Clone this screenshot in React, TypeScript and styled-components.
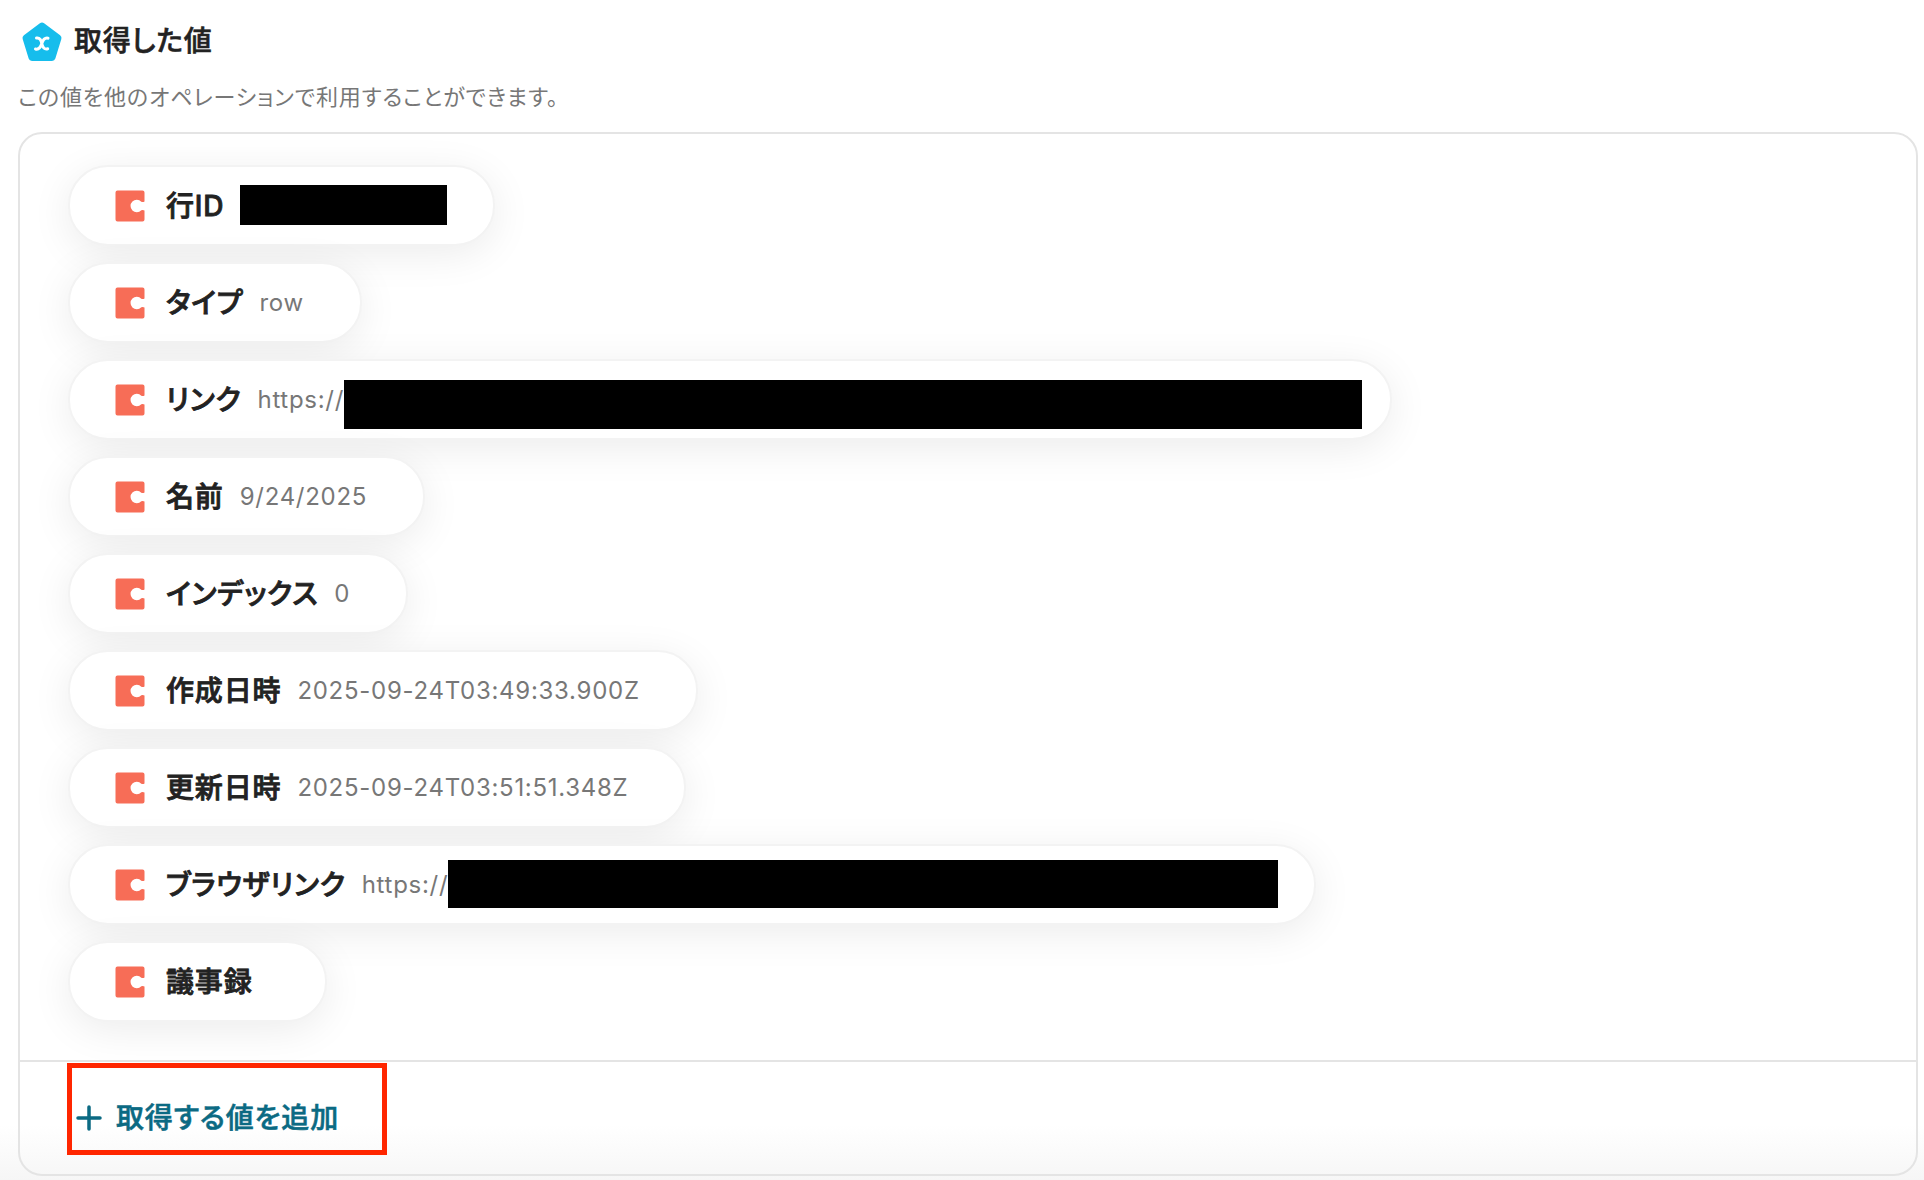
import React from "react";
import styled, { createGlobalStyle } from "styled-components";

const GlobalStyle = createGlobalStyle`
  * { box-sizing: border-box; }
  body {
    margin: 0;
    background: #fff;
    color: #222;
    font-family: Inter, "Noto Sans CJK JP", sans-serif;
    font-feature-settings: "palt", "kern";
    font-kerning: normal;
  }
`;

const Page = styled.main`
  min-height: 100vh;
  padding: 16px 6px 5px 18px;
  background: linear-gradient(to top, #f6f6f6, #fff 56px);
`;

const Header = styled.header`
  display: flex;
  align-items: center;
  gap: 8px;
  height: 50px;
`;

const Title = styled.h1`
  margin: 0;
  font-size: 28px;
  line-height: 50px;
  font-weight: 500;
  letter-spacing: 0.03em;
  -webkit-text-stroke: 0.02em currentColor;
`;

const Description = styled.p`
  margin: 13px 0 17px;
  font-size: 22px;
  line-height: 36px;
  letter-spacing: 0.04em;
  color: #777;
`;

const Panel = styled.section`
  border: 2px solid #e4e4e4;
  border-radius: 24px;
`;

const ValueList = styled.ul`
  display: flex;
  flex-direction: column;
  align-items: flex-start;
  gap: 16px;
  margin: 0;
  padding: 31px 48px 38px;
  list-style: none;
`;

const Pill = styled.li`
  display: flex;
  align-items: center;
  height: 81px;
  padding: 0 56px 0 44px;
  border: 2px solid #f3f3f3;
  border-radius: 40px;
  background: #fff;
  box-shadow: 0 8px 40px rgba(0, 0, 0, 0.08);
`;

const Label = styled.span`
  margin: 0 16px 0 20px;
  font-size: 28px;
  line-height: 40px;
  font-weight: 500;
  letter-spacing: 0.03em;
  -webkit-text-stroke: 0.03em currentColor;
`;

const Value = styled.span`
  font-size: 24px;
  line-height: 40px;
  letter-spacing: 0.03em;
  color: #777;
`;

const Redacted = styled.span<{ $width: number }>`
  position: relative;
  width: ${(p) => p.$width}px;
  height: 40px;
`;

const Mask = styled.span<{ $width: number; $height: number; $top: number }>`
  position: absolute;
  left: 0;
  top: ${(p) => p.$top}px;
  width: ${(p) => p.$width}px;
  height: ${(p) => p.$height}px;
  background: #000;
`;

const Footer = styled.footer`
  padding: 1px 47px 19px;
  border-top: 2px solid #e4e4e4;
`;

const Highlight = styled.div`
  display: flex;
  width: 320px;
  height: 92px;
  padding: 17px 4px 0;
  border: 5px solid #ff2600;
`;

const AddButton = styled.button`
  display: flex;
  align-items: center;
  gap: 14px;
  padding: 0;
  border: 0;
  background: none;
  color: #0b6a83;
  font: inherit;
  font-size: 28px;
  line-height: 40px;
  font-weight: 500;
  font-feature-settings: inherit;
  letter-spacing: 0.03em;
  -webkit-text-stroke: 0.02em currentColor;
  white-space: nowrap;
  cursor: pointer;
`;

const VariableIcon = () => (
  <svg width="48" height="48" viewBox="0 0 48 48" aria-hidden="true">
    <path
      d="M24 9 L40 21 L34 40.500 H14 L8 21 Z"
      fill="#16bdec"
      stroke="#16bdec"
      strokeWidth="7"
      strokeLinejoin="round"
    />
    <path
      d="M18.500 21C22 20.500 23.300 23.500 23.800 26.500C24.500 30.500 26.500 32.700 29.700 31.700M30 21.200C26.500 20.500 24.800 23.500 23.800 26.500C22.500 30.500 20.500 32.800 17.500 32"
      fill="none"
      stroke="#fff"
      strokeWidth="3"
      strokeLinecap="round"
    />
  </svg>
);

const CodaIcon = () => (
  <svg width="32" height="32" viewBox="0 0 32 32" aria-hidden="true">
    <path
      d="M3.500 .5H28.500Q30.500 .5 30.500 2.500V11.500Q29 12.500 27.300 11.800A6.200 6.200 0 1 0 27.300 20.200Q29 19.500 30.500 20.500V29.500Q30.500 31.500 28.500 31.500H3.500Q1.500 31.500 1.500 29.500V2.500Q1.500 .5 3.500 .5Z"
      fill="#f76d57"
    />
  </svg>
);

const PlusIcon = () => (
  <svg width="26" height="26" viewBox="0 0 26 26" aria-hidden="true">
    <path d="M13 2V24M2 13H24" stroke="currentColor" strokeWidth="3.500" strokeLinecap="round" />
  </svg>
);

type Item = {
  label: string;
  value?: string;
  redacted?: { space: number; width: number; height: number; top: number };
};

const items: Item[] = [
  { label: "行ID", redacted: { space: 197, width: 207, height: 40, top: -1 } },
  { label: "タイプ", value: "row" },
  { label: "リンク", value: "https://", redacted: { space: 990, width: 1018, height: 49, top: 0 } },
  { label: "名前", value: "9/24/2025" },
  { label: "インデックス", value: "0" },
  { label: "作成日時", value: "2025-09-24T03:49:33.900Z" },
  { label: "更新日時", value: "2025-09-24T03:51:51.348Z" },
  { label: "ブラウザリンク", value: "https://", redacted: { space: 810, width: 830, height: 48, top: -5 } },
  { label: "議事録" },
];

export default function App() {
  return (
    <>
      <GlobalStyle />
      <Page>
        <Header>
          <VariableIcon />
          <Title>取得した値</Title>
        </Header>
        <Description>この値を他のオペレーションで利用することができます。</Description>
        <Panel>
          <ValueList>
            {items.map(({ label, value, redacted }) => (
              <Pill key={label}>
                <CodaIcon />
                <Label>{label}</Label>
                {value && <Value>{value}</Value>}
                {redacted && (
                  <Redacted $width={redacted.space}>
                    <Mask $width={redacted.width} $height={redacted.height} $top={redacted.top} />
                  </Redacted>
                )}
              </Pill>
            ))}
          </ValueList>
          <Footer>
            <Highlight>
              <AddButton type="button">
                <PlusIcon />
                取得する値を追加
              </AddButton>
            </Highlight>
          </Footer>
        </Panel>
      </Page>
    </>
  );
}
